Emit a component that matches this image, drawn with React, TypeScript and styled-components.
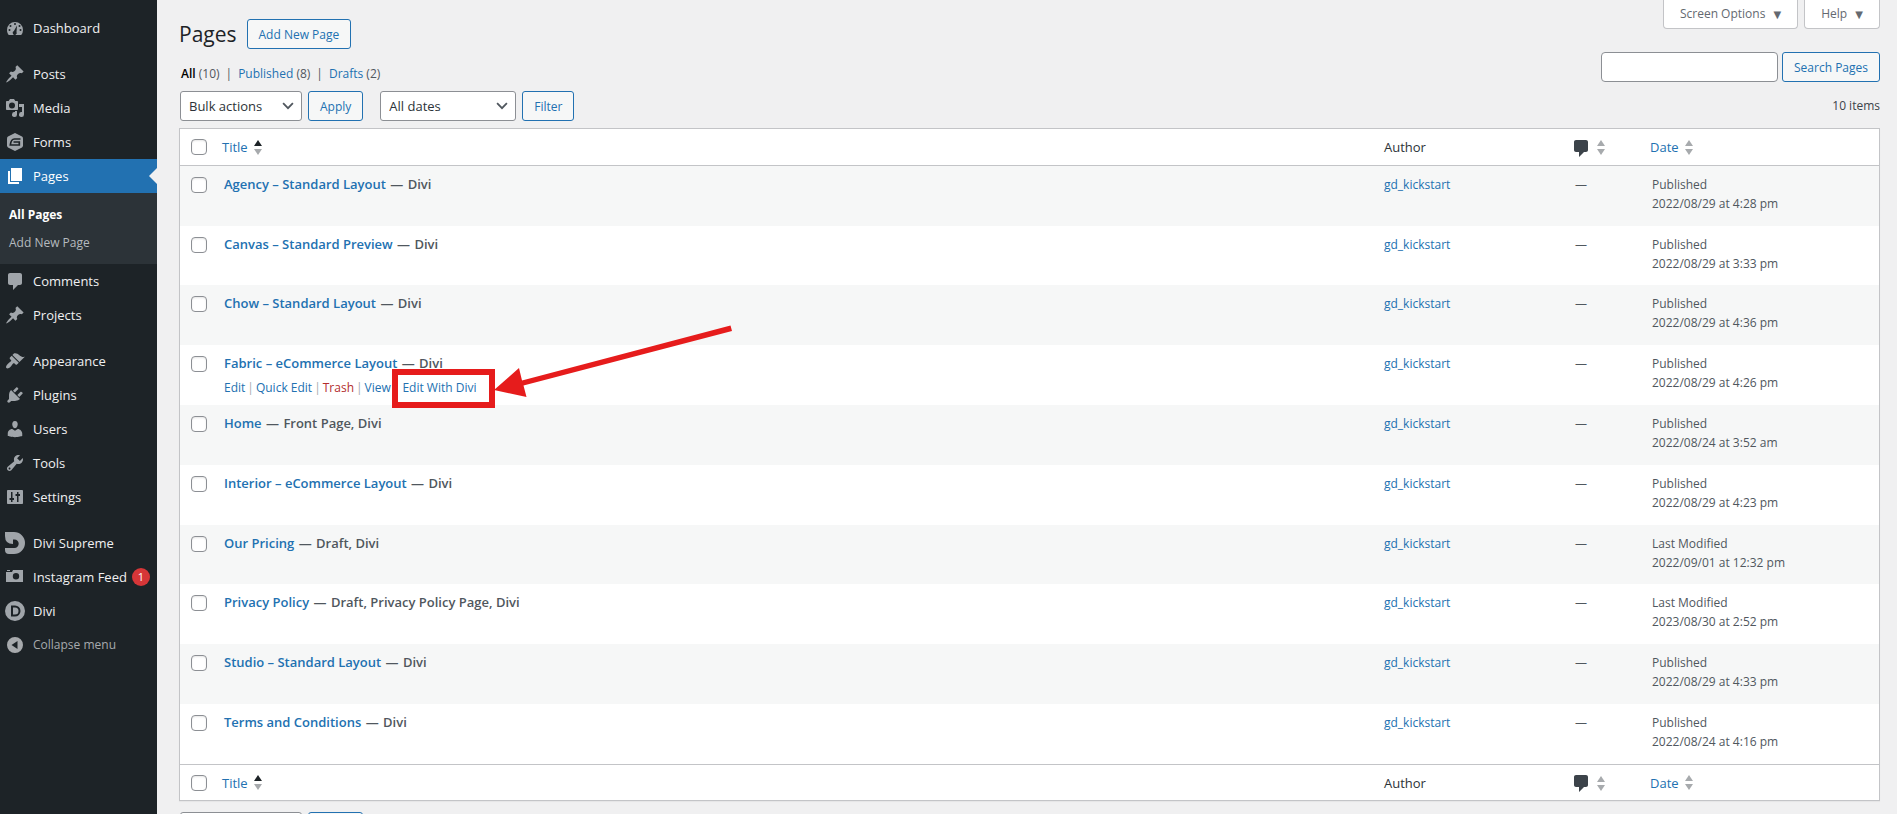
import React from "react";
import styled, { createGlobalStyle, css } from "styled-components";

const GlobalStyle = createGlobalStyle`
  *, *::before, *::after { box-sizing: border-box; }
  html, body, #root { height: 100%; }
  body {
    margin: 0;
    overflow: hidden;
    background: #f0f0f1;
    color: #3c434a;
    font-family: "Open Sans", "Noto Sans", sans-serif;
    font-size: 12px;
    line-height: 20px;
  }
  a { color: #2271b1; text-decoration: none; }
  button, input, select { font: inherit; }
`;

const Shell = styled.div`
  display: flex;
  height: 100vh;
  overflow: hidden;
`;

/* ---------- Side menu ---------- */

const SideMenu = styled.nav`
  flex: 0 0 157px;
  padding-top: 11px;
  background: #1d2327;
  color: #f0f0f1;
  font-size: 13px;
`;

const MenuGroup = styled.ul`
  list-style: none;
  margin: 0 0 12px;
  padding: 0;
`;

const MenuLink = styled.a<{ $current?: boolean }>`
  position: relative;
  display: flex;
  align-items: center;
  height: 34px;
  padding-left: 5px;
  gap: 8px;
  color: ${(p) => (p.$current ? "#fff" : "#f0f0f1")};
  background: ${(p) => (p.$current ? "#2271b1" : "transparent")};
  white-space: nowrap;

  svg { flex: none; color: ${(p) => (p.$current ? "#fff" : "#a0a5aa")}; }

  ${(p) =>
    p.$current &&
    css`
      &::after {
        content: "";
        position: absolute;
        right: 0;
        top: 9px;
        border: 8px solid transparent;
        border-right-color: #f0f0f1;
        border-left-width: 0;
      }
    `}
`;

const MenuButton = styled.button`
  display: flex;
  align-items: center;
  gap: 8px;
  width: 100%;
  height: 34px;
  padding: 0 0 0 5px;
  border: 0;
  background: none;
  color: #a7aaad;
  font-size: 12px;
`;

const SubMenu = styled.ul`
  list-style: none;
  margin: 0;
  padding: 8px 0 7px;
  background: #2c3338;
  font-size: 12px;
`;

const SubLink = styled.a<{ $current?: boolean }>`
  display: block;
  padding: 4px 9px;
  color: ${(p) => (p.$current ? "#fff" : "#b5babf")};
  font-weight: ${(p) => (p.$current ? 700 : 400)};
`;

const CountBadge = styled.span`
  flex: none;
  width: 18px;
  height: 18px;
  margin-left: -3px;
  border-radius: 9px;
  background: #d63638;
  color: #fff;
  font-size: 11px;
  line-height: 18px;
  text-align: center;
`;

/* ---------- Content area ---------- */

const Content = styled.main`
  flex: 1;
  min-width: 0;
  padding: 0 17px 0 22px;
`;

const TopBar = styled.header`
  display: flex;
  justify-content: space-between;
  height: 52px;
`;

const Heading = styled.div`
  display: flex;
  align-items: center;
  gap: 10px;
  height: 30px;
  margin-top: 19px;
`;

const PageTitle = styled.h1`
  margin: 0;
  color: #1d2327;
  font-size: 21px;
  font-weight: 400;
  line-height: 30px;
`;

const ScreenTabs = styled.div`
  display: flex;
  gap: 6px;
`;

const ScreenTab = styled.button`
  height: 29px;
  padding: 0 16px;
  border: 1px solid #c3c4c7;
  border-top: 0;
  border-radius: 0 0 4px 4px;
  background: #fff;
  color: #646970;
  line-height: 26px;

  span { margin-left: 5px; font-family: "DejaVu Sans", sans-serif; font-size: 10px; }
`;

const outlined = css`
  display: inline-block;
  height: 30px;
  padding: 1px 11px 0;
  border: 1px solid #2271b1;
  border-radius: 3px;
  background: #f6f7f7;
  color: #2271b1;
  line-height: 27px;
  white-space: nowrap;
`;

const ActionButton = styled.button`${outlined}`;
const ActionLink = styled.a`${outlined}`;

const FilterRow = styled.div`
  display: flex;
  justify-content: space-between;
  height: 39px;
`;

const StatusList = styled.ul`
  display: flex;
  gap: 6px;
  list-style: none;
  margin: 12px 0 0;
  padding: 0 0 0 2px;
  color: #50575e;

  a[aria-current] { color: #000; font-weight: 600; }
`;

const SearchForm = styled.form`
  display: flex;
  gap: 4px;
`;

const SearchInput = styled.input`
  width: 177px;
  height: 30px;
  padding: 0 8px;
  border: 1px solid #8c8f94;
  border-radius: 4px;
  background: #fff;
`;

const TableNav = styled.div`
  display: flex;
  justify-content: space-between;
  height: 30px;
  padding-left: 1px;
`;

const NavGroup = styled.div`
  display: flex;
  gap: 17px;
`;

const ControlPair = styled.div`
  display: flex;
  gap: 6px;
`;

const SelectWrap = styled.div<{ $width: number }>`
  position: relative;
  width: ${(p) => p.$width}px;

  svg { position: absolute; right: 7px; top: 8px; pointer-events: none; }
`;

const Select = styled.select`
  appearance: none;
  width: 100%;
  height: 30px;
  padding: 0 24px 0 8px;
  border: 1px solid #8c8f94;
  border-radius: 3px;
  background: #fff;
  color: #2c3338;
  font-size: 13px;
`;

const ItemCount = styled.span`
  line-height: 30px;
`;

/* ---------- Table ---------- */

const Table = styled.table`
  width: 100%;
  margin: 7px 0 11px;
  table-layout: fixed;
  border: 1px solid #c3c4c7;
  border-spacing: 0;
  background: #fff;
  box-shadow: 0 1px 1px rgba(0, 0, 0, 0.04);
`;

const CheckCol = styled.col`width: 34px;`;
const AuthorCol = styled.col`width: 191px;`;
const CommentCol = styled.col`width: 77px;`;
const DateCol = styled.col`width: 237px;`;

const HeadCell = styled.th<{ $foot?: boolean }>`
  height: ${(p) => (p.$foot ? 36 : 37)}px;
  padding: 0 8px;
  border: 0 solid #c3c4c7;
  border-width: ${(p) => (p.$foot ? "1px 0 0" : "0 0 1px")};
  color: #2c3338;
  font-size: 13px;
  font-weight: 400;
  text-align: left;
  vertical-align: middle;
`;

const CheckHead = styled(HeadCell)`padding: 0 0 0 11px;`;
const AuthorHead = styled(HeadCell)`padding: 0 10px;`;
const CommentHead = styled(HeadCell)`padding: 0 6px;`;

const SortLink = styled.a`
  display: flex;
  align-items: center;
  gap: 6px;
`;

const CommentSort = styled(SortLink)`
  padding-top: 1px;
  color: #3c434a;
`;

const BodyRow = styled.tr`
  height: 60px;
  &:nth-child(5n + 2) { height: 59px; }
  &:nth-child(odd) { background: #f6f7f7; }
`;

const Cell = styled.td`
  padding: 9px 10px 0;
  color: #50575e;
  line-height: 19px;
  vertical-align: top;
`;

const CheckCell = styled(Cell)`
  padding: 11px 0 0 11px;
`;

const Check = styled.input`
  appearance: none;
  display: block;
  width: 16px;
  height: 16px;
  margin: 0;
  border: 1px solid #8c8f94;
  border-radius: 4px;
  background: #fff;
  box-shadow: inset 0 1px 2px rgba(0, 0, 0, 0.1);
`;

const PageName = styled.strong`
  display: block;
  font-size: 13px;
  font-weight: 600;
  line-height: 18px;
`;

const Dash = styled.span`
  padding: 0 1px;
`;

const RowActions = styled.div`
  display: flex;
  gap: 2px;
  margin-top: 6px;
  color: #a7aaad;
`;

const TrashLink = styled.a`
  color: #b32d2e;
`;

const Highlighted = styled.span`
  position: relative;
  padding-left: 1px;

  svg { position: absolute; left: -9px; top: -53px; pointer-events: none; }
`;

/* ---------- Icons ---------- */

const iconPaths: Record<string, React.ReactNode> = {
  dashboard: (
    <path fillRule="evenodd" d="M3.76 17h12.48A7.98 7.98 0 0 0 18 12a8 8 0 0 0-16 0c0 1.900.66 3.640 1.760 5zM10 5a1 1 0 1 1 0 2 1 1 0 0 1 0-2zM5.500 7a1 1 0 1 1 0 2 1 1 0 0 1 0-2zm9 0a1 1 0 1 1 0 2 1 1 0 0 1 0-2zM4.500 11a1 1 0 1 1 0 2 1 1 0 0 1 0-2zm11 0a1 1 0 1 1 0 2 1 1 0 0 1 0-2zM12 7.500l-.5 6.500a2 2 0 1 1-2.600-.9z" />
  ),
  pin: (
    <path d="M10.440 3.020l1.820-1.820 6.360 6.350-1.830 1.820c-1.050-.68-2.480-.57-3.410.36l-.75.75c-.92.93-1.040 2.350-.35 3.410l-1.830 1.820-2.410-2.410-2.800 2.790c-.42.42-3.380 2.710-3.800 2.290s1.860-3.390 2.280-3.810l2.790-2.790L4.100 9.360l1.830-1.820c1.050.69 2.480.57 3.400-.36l.75-.75c.93-.92 1.050-2.350.36-3.410z" />
  ),
  media: (
    <path fillRule="evenodd" d="M13 11V4c0-.55-.45-1-1-1h-1.670L9 1H5L3.670 3H2c-.55 0-1 .45-1 1v7c0 .55.45 1 1 1h10c.55 0 1-.45 1-1zM7 4.500a3 3 0 1 1 0 6 3 3 0 0 1 0-6zM14 6h5v10.500a2.500 2.500 0 1 1-2-2.450V9h-3zm-4 8.050V13h2v3.500a2.500 2.500 0 1 1-2-2.450z" />
  ),
  forms: (
    <>
      <path d="M10 1l7 3.600q1 .6 1 1.800v7.200q0 1.200-1 1.800L10 19l-7-3.600q-1-.6-1-1.800V6.400q0-1.200 1-1.800z" />
      <path d="M15.500 7H9.500Q6 7 5.300 13h9v-3H8.500" fill="none" stroke="#1d2327" strokeWidth="1.700" />
    </>
  ),
  pages: <path d="M6 15V2h11v13H6zm-1 1h9v2H3V5h2v11z" />,
  comment: <path d="M5 2h10c1.100 0 2 .9 2 2v8c0 1.100-.9 2-2 2h-2l-5 5v-5H5c-1.100 0-2-.9-2-2V4c0-1.100.9-2 2-2z" />,
  brush: (
    <path d="M14.480 11.060L7.410 3.990l1.500-1.500c.5-.56 2.300-.47 3.510.32 1.210.8 1.430 1.280 2.910 2.100 1.180.64 2.450 1.260 4.450.85zm-.71.71L6.700 4.700 4.930 6.470c-.39.39-.39 1.020 0 1.410l1.060 1.060c.39.39.39 1.030 0 1.420-.6.600-1.430 1.110-2.210 1.690-.35.26-.7.530-1.010.84C1.430 14.230.4 16.080 1.400 17.070c.99 1 2.840-.03 4.180-1.360.31-.31.58-.66.85-1.020.57-.78 1.080-1.610 1.690-2.210.39-.39 1.020-.39 1.410 0l1.060 1.060c.39.39 1.020.39 1.410 0z" />
  ),
  plug: (
    <path d="M13.110 4.360L9.870 7.600 8 5.730l3.240-3.240c.35-.34 1.050-.2 1.560.32.52.51.66 1.210.31 1.550zm-8 1.770l.91-1.120 9.010 9.010-1.190.84c-.71.71-2.630 1.160-3.820 1.160H6.140L4.900 17.260c-.59.59-1.540.59-2.120 0-.59-.58-.59-1.530 0-2.120l1.240-1.240v-3.880c0-1.130.4-3.190 1.090-3.890zm7.260 3.970l3.240-3.240c.34-.35 1.040-.21 1.550.31.52.51.66 1.210.31 1.550l-3.240 3.250z" />
  ),
  user: (
    <path d="M10 9.250c-2.270 0-2.730-3.440-2.730-3.440C7 4.020 7.820 2 9.970 2c2.160 0 2.980 2.020 2.710 3.810 0 0-.41 3.440-2.680 3.440zm0 2.570L12.720 10c2.390 0 4.520 2.330 4.520 4.530v2.490s-3.650 1.130-7.240 1.130c-3.650 0-7.240-1.130-7.240-1.130v-2.490c0-2.250 1.940-4.480 4.470-4.480z" />
  ),
  wrench: (
    <path d="M16.680 9.770c-1.340 1.340-3.300 1.670-4.950.99l-5.410 6.520c-.99.99-2.590.99-3.580 0s-.99-2.590 0-3.570l6.520-5.420c-.68-1.650-.35-3.610.99-4.950 1.280-1.280 3.120-1.620 4.720-1.060l-2.890 2.890 2.820 2.820 2.860-2.870c.53 1.580.18 3.390-1.080 4.650zM3.810 16.210c.4.390 1.040.39 1.430 0 .4-.4.4-1.040 0-1.430-.39-.4-1.030-.4-1.430 0-.39.390-.39 1.030 0 1.430z" />
  ),
  settings: (
    <path fillRule="evenodd" d="M18 16V4c0-.55-.45-1-1-1H3c-.55 0-1 .45-1 1v12c0 .55.45 1 1 1h14c.55 0 1-.45 1-1zM6 5h1.500v6H9v2H7.500v2H6v-2H4.500v-2H6zm6 10V9h-1.500V7H12V5h1.500v2H15v2h-1.500v6z" />
  ),
  supreme: (
    <path d="M0 0V-1h9a11 11 0 0 1 0 22H4q-4 0-4-4v-2h9.500a4.200 4.200 0 0 0 0-8.400H8V11Q0 11 0 3z" />
  ),
  camera: (
    <path fillRule="evenodd" d="M2 3h3v1H2zM1 5h6l1-2h10v12H1zM11 6a3.200 3.200 0 1 0 0 6.400A3.200 3.200 0 0 0 11 6z" />
  ),
  divi: (
    <path fillRule="evenodd" d="M10 0a10 10 0 1 1 0 20 10 10 0 0 1 0-20zM6 4.500v11h4a5.500 5.500 0 0 0 0-11zm2 2h2a3.500 3.500 0 0 1 0 7H8z" />
  ),
  collapse: <path fillRule="evenodd" d="M10 2a8 8 0 1 1 0 16 8 8 0 0 1 0-16zm2.500 4L6.500 10l6 4z" />,
};

function Icon({ name }: { name: string }) {
  return (
    <svg width="20" height="20" viewBox="0 0 20 20" fill="currentColor" overflow="visible" aria-hidden="true">
      {iconPaths[name]}
    </svg>
  );
}

function SortArrows({ ascending }: { ascending?: boolean }) {
  return (
    <svg width="8" height="15" viewBox="0 0 8 15" aria-hidden="true">
      <path d="M4 0l4 6H0z" fill={ascending ? "#1d2327" : "#a7aaad"} />
      <path d="M0 9h8l-4 6z" fill="#a7aaad" />
    </svg>
  );
}

function Chevron() {
  return (
    <svg width="14" height="14" viewBox="0 0 20 20" aria-hidden="true">
      <path d="M3 6l7 7 7-7" fill="none" stroke="#50575e" strokeWidth="2.600" />
    </svg>
  );
}

function Callout() {
  return (
    <svg width="342" height="88" viewBox="0 0 342 88" fill="#e61c1c" aria-hidden="true">
      <rect x="3" y="47" width="97" height="33" fill="none" stroke="#e61c1c" strokeWidth="6" />
      <path d="M102 65l25-22 3 12.500L338.500.5l1.500 5.500L131.500 60.500l3 11.500z" />
    </svg>
  );
}

/* ---------- Data ---------- */

type Item = { label: string; icon: string; badge?: string; current?: boolean; children?: string[] };

const menu: Item[][] = [
  [{ label: "Dashboard", icon: "dashboard" }],
  [
    { label: "Posts", icon: "pin" },
    { label: "Media", icon: "media" },
    { label: "Forms", icon: "forms" },
    { label: "Pages", icon: "pages", current: true, children: ["All Pages", "Add New Page"] },
    { label: "Comments", icon: "comment" },
    { label: "Projects", icon: "pin" },
  ],
  [
    { label: "Appearance", icon: "brush" },
    { label: "Plugins", icon: "plug" },
    { label: "Users", icon: "user" },
    { label: "Tools", icon: "wrench" },
    { label: "Settings", icon: "settings" },
  ],
];

const extras: Item[] = [
  { label: "Divi Supreme", icon: "supreme" },
  { label: "Instagram Feed", icon: "camera", badge: "1" },
  { label: "Divi", icon: "divi" },
];

type Page = { title: string; state: string; status: string; date: string; open?: boolean };

const pages: Page[] = [
  { title: "Agency – Standard Layout", state: "Divi", status: "Published", date: "2022/08/29 at 4:28 pm" },
  { title: "Canvas – Standard Preview", state: "Divi", status: "Published", date: "2022/08/29 at 3:33 pm" },
  { title: "Chow – Standard Layout", state: "Divi", status: "Published", date: "2022/08/29 at 4:36 pm" },
  { title: "Fabric – eCommerce Layout", state: "Divi", status: "Published", date: "2022/08/29 at 4:26 pm", open: true },
  { title: "Home", state: "Front Page, Divi", status: "Published", date: "2022/08/24 at 3:52 am" },
  { title: "Interior – eCommerce Layout", state: "Divi", status: "Published", date: "2022/08/29 at 4:23 pm" },
  { title: "Our Pricing", state: "Draft, Divi", status: "Last Modified", date: "2022/09/01 at 12:32 pm" },
  { title: "Privacy Policy", state: "Draft, Privacy Policy Page, Divi", status: "Last Modified", date: "2023/08/30 at 2:52 pm" },
  { title: "Studio – Standard Layout", state: "Divi", status: "Published", date: "2022/08/29 at 4:33 pm" },
  { title: "Terms and Conditions", state: "Divi", status: "Published", date: "2022/08/24 at 4:16 pm" },
];

/* ---------- Parts ---------- */

function MenuItem({ item }: { item: Item }) {
  return (
    <li>
      <MenuLink href="#" $current={item.current}>
        <Icon name={item.icon} />
        {item.label}
        {item.badge && <CountBadge>{item.badge}</CountBadge>}
      </MenuLink>
      {item.children && (
        <SubMenu>
          {item.children.map((label, i) => (
            <li key={label}>
              <SubLink href="#" $current={i === 0}>{label}</SubLink>
            </li>
          ))}
        </SubMenu>
      )}
    </li>
  );
}

function HeaderCells({ foot }: { foot?: boolean }) {
  return (
    <tr>
      <CheckHead $foot={foot}><Check type="checkbox" aria-label="Select all" /></CheckHead>
      <HeadCell $foot={foot}>
        <SortLink href="#">Title <SortArrows ascending /></SortLink>
      </HeadCell>
      <AuthorHead $foot={foot}>Author</AuthorHead>
      <CommentHead $foot={foot}>
        <CommentSort href="#" aria-label="Comments">
          <Icon name="comment" />
          <SortArrows />
        </CommentSort>
      </CommentHead>
      <HeadCell $foot={foot}>
        <SortLink href="#">Date <SortArrows /></SortLink>
      </HeadCell>
    </tr>
  );
}

function SelectAction({ label, option, width, button }: { label: string; option: string; width: number; button: string }) {
  return (
    <ControlPair>
      <SelectWrap $width={width}>
        <Select aria-label={label}><option>{option}</option></Select>
        <Chevron />
      </SelectWrap>
      <ActionButton type="button">{button}</ActionButton>
    </ControlPair>
  );
}

export default function App() {
  return (
    <Shell>
      <GlobalStyle />
      <SideMenu aria-label="Main menu">
        {menu.map((group, i) => (
          <MenuGroup key={i}>
            {group.map((item) => <MenuItem key={item.label} item={item} />)}
          </MenuGroup>
        ))}
        <MenuGroup>
          {extras.map((item) => <MenuItem key={item.label} item={item} />)}
          <li><MenuButton type="button"><Icon name="collapse" />Collapse menu</MenuButton></li>
        </MenuGroup>
      </SideMenu>

      <Content>
        <TopBar>
          <Heading>
            <PageTitle>Pages</PageTitle>
            <ActionLink href="#">Add New Page</ActionLink>
          </Heading>
          <ScreenTabs>
            <ScreenTab type="button">Screen Options <span>▼</span></ScreenTab>
            <ScreenTab type="button">Help <span>▼</span></ScreenTab>
          </ScreenTabs>
        </TopBar>

        <FilterRow>
          <StatusList>
            <li><a href="#" aria-current="page">All</a> (10)</li>
            <li>|</li>
            <li><a href="#">Published</a> (8)</li>
            <li>|</li>
            <li><a href="#">Drafts</a> (2)</li>
          </StatusList>
          <SearchForm>
            <SearchInput type="search" aria-label="Search pages" />
            <ActionButton type="button">Search Pages</ActionButton>
          </SearchForm>
        </FilterRow>

        <TableNav>
          <NavGroup>
            <SelectAction label="Bulk actions" option="Bulk actions" width={122} button="Apply" />
            <SelectAction label="Filter by date" option="All dates" width={136} button="Filter" />
          </NavGroup>
          <ItemCount>10 items</ItemCount>
        </TableNav>

        <Table>
          <colgroup>
            <CheckCol />
            <col />
            <AuthorCol />
            <CommentCol />
            <DateCol />
          </colgroup>
          <thead><HeaderCells /></thead>
          <tbody>
            {pages.map((page) => (
              <BodyRow key={page.title}>
                <CheckCell><Check type="checkbox" aria-label={`Select ${page.title}`} /></CheckCell>
                <Cell>
                  <PageName><a href="#">{page.title}</a> <Dash>—</Dash> {page.state}</PageName>
                  {page.open && (
                    <RowActions>
                      <a href="#">Edit</a>|<a href="#">Quick Edit</a>|<TrashLink href="#">Trash</TrashLink>|
                      <a href="#">View</a>|
                      <Highlighted><a href="#">Edit With Divi</a><Callout /></Highlighted>
                    </RowActions>
                  )}
                </Cell>
                <Cell><a href="#">gd_kickstart</a></Cell>
                <Cell>—</Cell>
                <Cell>
                  <div>{page.status}</div>
                  <div>{page.date}</div>
                </Cell>
              </BodyRow>
            ))}
          </tbody>
          <tfoot><HeaderCells foot /></tfoot>
        </Table>

        <TableNav>
          <NavGroup>
            <SelectAction label="Bulk actions, bottom" option="Bulk actions" width={122} button="Apply" />
          </NavGroup>
        </TableNav>
      </Content>
    </Shell>
  );
}
